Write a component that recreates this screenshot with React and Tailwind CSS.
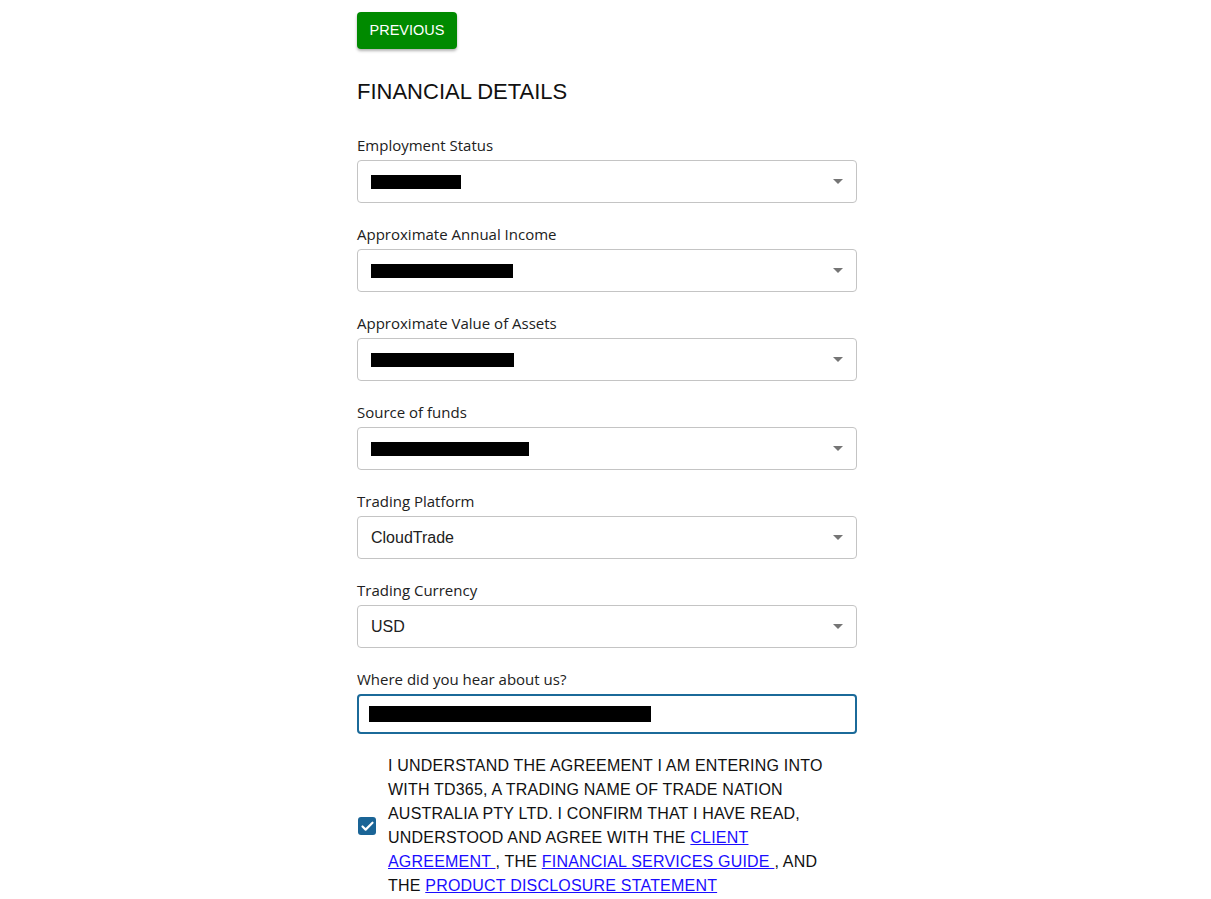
import { Check } from 'lucide-react';

const SELECTS = [
  { label: 'Employment Status', redact: 'w-[90px]' },
  { label: 'Approximate Annual Income', redact: 'w-[142px]' },
  { label: 'Approximate Value of Assets', redact: 'w-[143px]' },
  { label: 'Source of funds', redact: 'w-[158px]' },
  { label: 'Trading Platform', value: 'CloudTrade' },
  { label: 'Trading Currency', value: 'USD' },
];

const Caret = () => (
  <svg width="10" height="5" viewBox="0 0 10 5" className="shrink-0">
    <path d="M0 0h10L5 5z" fill="#757575" />
  </svg>
);

const Field = ({ label, value, redact }) => (
  <div className="flex flex-col">
    <label className="text-[15px] leading-5 text-[#212121] font-['Open_Sans','Noto_Sans',sans-serif] mb-[5px]">
      {label}
    </label>
    <div className="h-[43px] border border-[#c4c4c4] rounded-[4px] flex items-center pl-[13px] pr-[13px] bg-white">
      {value ? (
        <span className="flex-1 text-[16px] text-[#212121] font-['Liberation_Sans',Arial,sans-serif]">{value}</span>
      ) : (
        <div className="flex-1">
          <div className={`${redact} h-[14px] bg-black`} />
        </div>
      )}
      <Caret />
    </div>
  </div>
);

export default function App() {
  return (
    <div className="min-h-screen bg-white">
      <div className="w-[500px] ml-[357px] pt-3 pb-2">
        <button className="w-[100px] h-[37px] rounded-[4px] bg-[#008a00] text-white text-[14.5px] font-['Liberation_Sans',Arial,sans-serif] shadow-[0_2px_3px_rgba(0,0,0,0.3)]">
          PREVIOUS
        </button>

        <h2 className="mt-[29px] text-[22px] leading-7 text-[#111] font-['Liberation_Sans',Arial,sans-serif]">
          FINANCIAL DETAILS
        </h2>

        <div className="mt-[29px] flex flex-col gap-[21px]">
          {SELECTS.map(s => (
            <Field key={s.label} {...s} />
          ))}

          <div className="flex flex-col">
            <label className="text-[15px] leading-5 text-[#212121] font-['Open_Sans','Noto_Sans',sans-serif] mb-[5px]">
              Where did you hear about us?
            </label>
            <div className="h-[40px] border-2 border-[#1b6a99] rounded-[4px] flex items-center pl-[10px]">
              <div className="w-[282px] h-[16px] bg-black" />
            </div>
          </div>
        </div>

        <div className="mt-[20px] flex items-center gap-[12px] font-['Liberation_Sans',Arial,sans-serif] text-[16px] tracking-[0.2px] leading-6 text-[#111]">
          <div className="w-[18px] h-[18px] ml-[1px] rounded-[3px] bg-[#1a6496] flex items-center justify-center shrink-0">
            <Check size={15} strokeWidth={3.5} className="text-white" />
          </div>
          <p className="w-[445px]">
            I UNDERSTAND THE AGREEMENT I AM ENTERING INTO WITH TD365, A TRADING NAME OF TRADE NATION AUSTRALIA PTY LTD. I CONFIRM THAT I HAVE READ, UNDERSTOOD AND AGREE WITH THE{' '}
            <a href="#" className="text-[#1a0dff] underline">CLIENT AGREEMENT </a>, THE{' '}
            <a href="#" className="text-[#1a0dff] underline">FINANCIAL SERVICES GUIDE </a>, AND THE{' '}
            <a href="#" className="text-[#1a0dff] underline">PRODUCT DISCLOSURE STATEMENT</a>
          </p>
        </div>
      </div>
    </div>
  );
}
